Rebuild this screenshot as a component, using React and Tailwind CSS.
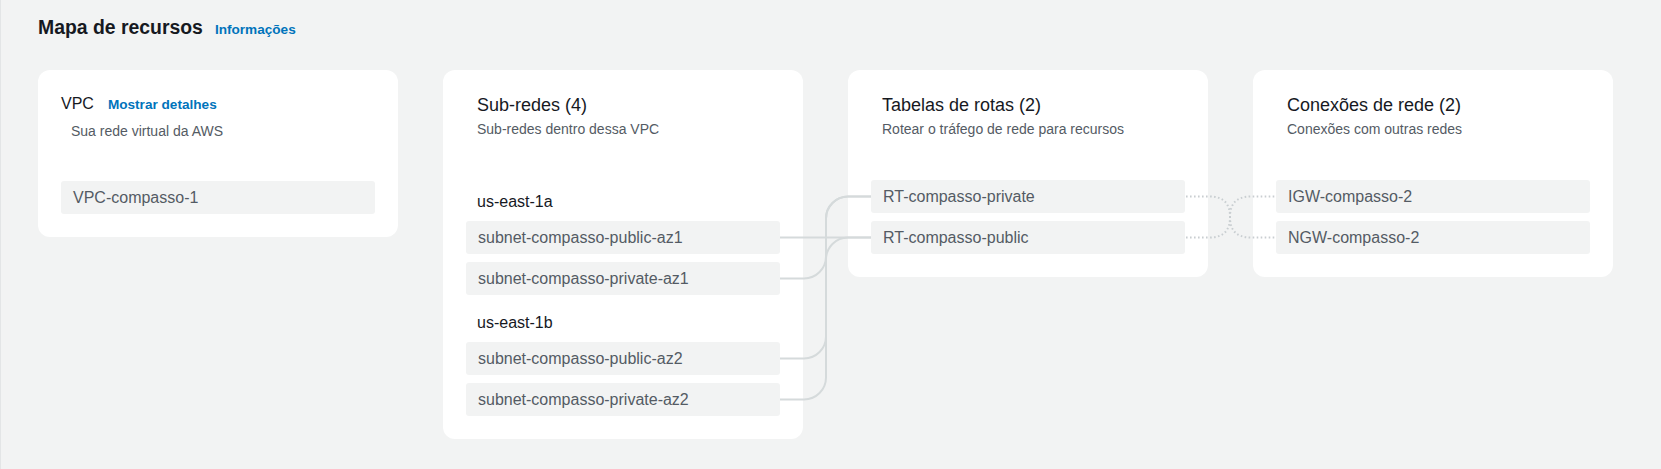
import React from "react";

const subnetGroups = [
  { az: "us-east-1a", items: ["subnet-compasso-public-az1", "subnet-compasso-private-az1"] },
  { az: "us-east-1b", items: ["subnet-compasso-public-az2", "subnet-compasso-private-az2"] },
];

const routeTables = ["RT-compasso-private", "RT-compasso-public"];
const connections = ["IGW-compasso-2", "NGW-compasso-2"];

function Item({ children }) {
  return (
    <div className="h-[33px] rounded-[3px] bg-[#f2f3f3] px-3 text-[16px] leading-[33px] text-[#545b64]">
      {children}
    </div>
  );
}

function CardHeader({ title, subtitle }) {
  return (
    <div className="pl-[11px]">
      <h3 className="text-[18px] leading-6 text-[#16191f]">{title}</h3>
      <p className="mt-[2px] text-[14px] leading-5 text-[#545b64]">{subtitle}</p>
    </div>
  );
}

function Card({ children }) {
  return <div className="w-[360px] rounded-xl bg-white p-[23px]">{children}</div>;
}

// connector lines, coordinates relative to the card row
function Connectors() {
  const solid = "#d5dadb";
  const dotted = "#c9ced1";
  return (
    <svg
      className="pointer-events-none absolute left-0 top-0"
      width="1575"
      height="370"
      fill="none"
    >
      <g stroke={solid} strokeWidth="2">
        <path d="M742 167.5 H833" />
        <path d="M742 208.5 H766 A22 22 0 0 0 788 186.5 V148.5 A22 22 0 0 1 810 126.5 H833" />
        <path d="M742 288.5 H766 A22 22 0 0 0 788 266.5 V189.5 A22 22 0 0 1 810 167.5 H833" />
        <path d="M742 329.5 H766 A22 22 0 0 0 788 307.5 V148.5 A22 22 0 0 1 810 126.5 H833" />
      </g>
      <g stroke={dotted} strokeWidth="2" strokeDasharray="1.6 2.4">
        <path d="M1148 126.5 H1171 C1187 126.5 1192 135 1192 147 C1192 159 1197 167.5 1213 167.5 H1238" />
        <path d="M1148 167.5 H1171 C1187 167.5 1192 159 1192 147 C1192 135 1197 126.5 1213 126.5 H1238" />
      </g>
    </svg>
  );
}

export default function App() {
  return (
    <div
      className="h-[469px] border-l border-[#e3e5e6] bg-[#f2f3f3] pl-[37px] pt-[15px]"
      style={{ fontFamily: '"Liberation Sans", Arial, sans-serif' }}
    >
      <div className="flex items-baseline gap-[12px]">
        <h2 className="text-[19.4px] font-bold leading-6 text-[#16191f]">Mapa de recursos</h2>
        <a className="text-[13.6px] font-bold text-[#0073bb]">Informações</a>
      </div>

      <div className="relative mt-[30px] flex items-start gap-[45px]">
        <Card>
          <div className="flex items-baseline">
            <span className="text-[16px] leading-[22px] text-[#16191f]">VPC</span>
            <a className="ml-[14px] text-[13.6px] font-bold text-[#0073bb]">Mostrar detalhes</a>
          </div>
          <p className="mt-[5px] pl-[10px] text-[14px] leading-5 text-[#545b64]">
            Sua rede virtual da AWS
          </p>
          <div className="mt-[40px]">
            <Item>VPC-compasso-1</Item>
          </div>
        </Card>

        <Card>
          <CardHeader title="Sub-redes (4)" subtitle="Sub-redes dentro dessa VPC" />
          <div className="mt-[52px] flex flex-col">
            {subnetGroups.map((g, i) => (
              <div key={g.az} className={i > 0 ? "mt-[17px]" : ""}>
                <div className="pl-[11px] text-[16px] leading-[22px] text-[#16191f]">{g.az}</div>
                <div className="mt-[8px] flex flex-col gap-[8px]">
                  {g.items.map((s) => (
                    <Item key={s}>{s}</Item>
                  ))}
                </div>
              </div>
            ))}
          </div>
        </Card>

        <Card>
          <CardHeader title="Tabelas de rotas (2)" subtitle="Rotear o tráfego de rede para recursos" />
          <div className="mt-[41px] flex flex-col gap-[8px]">
            {routeTables.map((r) => (
              <Item key={r}>{r}</Item>
            ))}
          </div>
        </Card>

        <Card>
          <CardHeader title="Conexões de rede (2)" subtitle="Conexões com outras redes" />
          <div className="mt-[41px] flex flex-col gap-[8px]">
            {connections.map((c) => (
              <Item key={c}>{c}</Item>
            ))}
          </div>
        </Card>

        <Connectors />
      </div>
    </div>
  );
}
